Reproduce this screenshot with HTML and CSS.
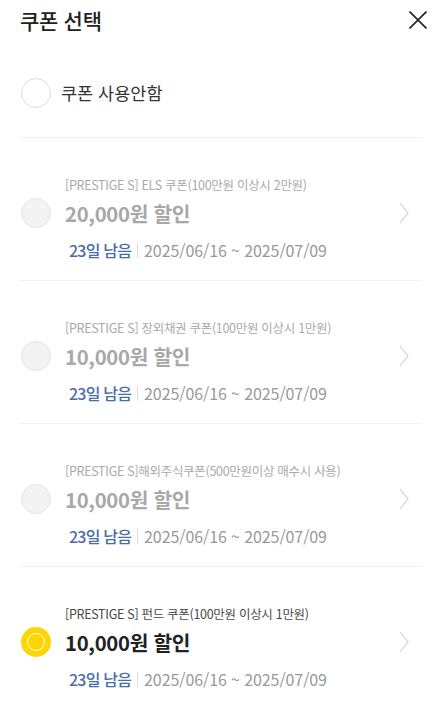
FILE: index.html
```html
<!DOCTYPE html>
<html lang="ko">
<head>
<meta charset="utf-8">
<title>쿠폰 선택</title>
<link rel="stylesheet" href="styles.css">
</head>
<body>
<div class="sheet">
  <header class="header">
    <h1 class="title">쿠폰 선택</h1>
    <button class="close" aria-label="닫기">
      <svg width="18" height="18" viewBox="0 0 18 18"><path d="M0.5 0.5 L17.5 17.5 M17.5 0.5 L0.5 17.5" stroke="#222" stroke-width="1.6" fill="none"/></svg>
    </button>
  </header>

  <div class="none-row">
    <span class="radio"></span>
    <span class="none-label">쿠폰 사용안함</span>
  </div>

  <ul class="coupons">
    <li class="coupon disabled">
      <span class="radio gray"></span>
      <p class="name">[PRESTIGE S] ELS 쿠폰(100만원 이상시 2만원)</p>
      <p class="amount">20,000원 할인</p>
      <p class="period"><span class="days">23일 남음</span><span class="sep"></span><span class="dates">2025/06/16 ~ 2025/07/09</span></p>
      <svg class="chev" width="10" height="22" viewBox="0 0 10 22"><path d="M1 1 L9 11 L1 21" stroke="#d2d2d2" stroke-width="1.2" fill="none"/></svg>
    </li>
    <li class="coupon disabled">
      <span class="radio gray"></span>
      <p class="name">[PRESTIGE S] 장외채권 쿠폰(100만원 이상시 1만원)</p>
      <p class="amount">10,000원 할인</p>
      <p class="period"><span class="days">23일 남음</span><span class="sep"></span><span class="dates">2025/06/16 ~ 2025/07/09</span></p>
      <svg class="chev" width="10" height="22" viewBox="0 0 10 22"><path d="M1 1 L9 11 L1 21" stroke="#d2d2d2" stroke-width="1.2" fill="none"/></svg>
    </li>
    <li class="coupon disabled">
      <span class="radio gray"></span>
      <p class="name">[PRESTIGE S]해외주식쿠폰(500만원이상 매수시 사용)</p>
      <p class="amount">10,000원 할인</p>
      <p class="period"><span class="days">23일 남음</span><span class="sep"></span><span class="dates">2025/06/16 ~ 2025/07/09</span></p>
      <svg class="chev" width="10" height="22" viewBox="0 0 10 22"><path d="M1 1 L9 11 L1 21" stroke="#d2d2d2" stroke-width="1.2" fill="none"/></svg>
    </li>
    <li class="coupon selected">
      <span class="radio on"></span>
      <p class="name">[PRESTIGE S] 펀드 쿠폰(100만원 이상시 1만원)</p>
      <p class="amount">10,000원 할인</p>
      <p class="period"><span class="days">23일 남음</span><span class="sep"></span><span class="dates">2025/06/16 ~ 2025/07/09</span></p>
      <svg class="chev" width="10" height="22" viewBox="0 0 10 22"><path d="M1 1 L9 11 L1 21" stroke="#d2d2d2" stroke-width="1.2" fill="none"/></svg>
    </li>
  </ul>
</div>
</body>
</html>
```

FILE: styles.css
```css
* { box-sizing: border-box; }
html, body { margin: 0; padding: 0; background: #fff; }
body {
  font-family: "Noto Sans CJK KR", "Noto Sans", sans-serif;
  color: #222;
  overflow: hidden;
}
.sheet { padding: 0 20px; }

.header {
  height: 40px;
  display: flex;
  align-items: center;
  justify-content: space-between;
}
.title {
  margin: 0;
  font-size: 21px;
  font-weight: 500;
  letter-spacing: -0.3px;
  line-height: 28px;
  color: #222;
}
.close {
  border: 0;
  background: none;
  padding: 0;
  width: 18px;
  height: 18px;
  margin-right: -5px;
  display: flex;
}

.none-row {
  display: flex;
  align-items: center;
  gap: 10px;
  padding: 38px 0 29px;
  border-bottom: 1px solid #f1f1f1;
}
.none-label {
  font-size: 17.5px;
  color: #333;
  line-height: 30px;
}

.radio {
  width: 30px;
  height: 30px;
  border-radius: 50%;
  border: 1.5px solid #dcdcdc;
  background: #fff;
  flex: none;
  margin-left: 1px;
}
.radio.gray { background: #f3f3f3; border-color: #e4e4e4; }
.radio.on {
  background: #ffd500;
  border: 0;
  position: relative;
}
.radio.on::after {
  content: "";
  position: absolute;
  left: 6px;
  top: 6px;
  width: 18px;
  height: 18px;
  border-radius: 50%;
  border: 1.6px solid #fff;
  box-sizing: border-box;
}

.coupons { list-style: none; margin: 0; padding: 0; }
.coupon {
  display: grid;
  grid-template-columns: 30px 1fr auto;
  grid-template-rows: 20px 32px 35px;
  column-gap: 15px;
  padding: 37px 0 18px;
  border-bottom: 1px solid #f1f1f1;
}
.coupon .name { grid-column: 2; grid-row: 1; margin: 0; }
.coupon .radio { grid-column: 1; grid-row: 2; align-self: center; margin-top: 4px; }
.coupon .amount { grid-column: 2; grid-row: 2; margin: 4px 0 0; }
.coupon .period { grid-column: 2; grid-row: 3; margin: 11px 0 0; }
.coupon .chev { grid-column: 3; grid-row: 2; align-self: center; margin: 4px 13px 0 0; }

.name {
  font-size: 12.5px;
  line-height: 20px;
  color: #aaa;
  letter-spacing: -0.3px;
  white-space: nowrap;
}
.amount {
  font-size: 20.3px;
  font-weight: 700;
  line-height: 28px;
  color: #a8a8a8;
  letter-spacing: -0.3px;
}
.period {
  display: flex;
  align-items: center;
  font-size: 16px;
  line-height: 24px;
  white-space: nowrap;
  padding-left: 4px;
}
.days { color: #4a6ca8; font-weight: 500; letter-spacing: -0.8px; }
.sep {
  width: 1px;
  height: 15px;
  background: #dcdcdc;
  margin: 0 6px;
}
.dates { color: #999; letter-spacing: -0.1px; }

.selected .name { color: #4a4a4a; }
.selected .amount { color: #222; }
```
